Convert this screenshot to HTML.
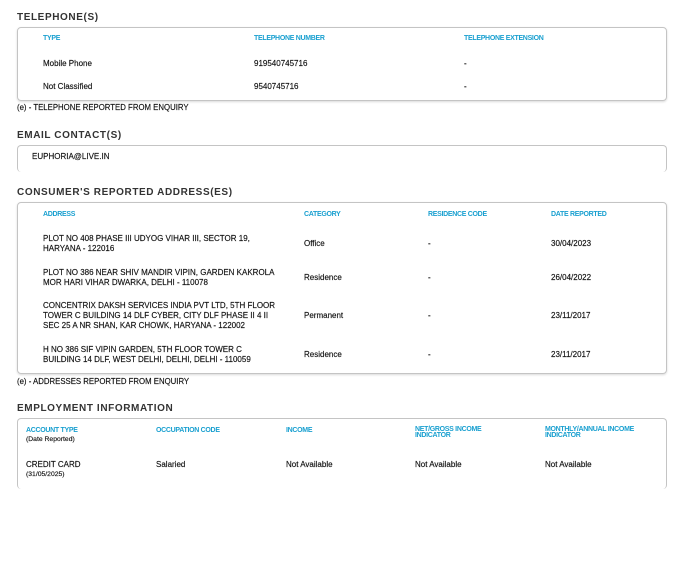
<!DOCTYPE html>
<html><head><meta charset="utf-8"><style>
body{margin:0;width:686px;height:578px;background:#fff;font-family:"Liberation Sans",sans-serif;color:#222;position:relative;overflow:hidden}
div{position:absolute;white-space:nowrap}
.t{font-size:10px;font-weight:bold;color:#333;letter-spacing:0.6px;left:17px}
.box{border:1px solid #c4c4c4;border-radius:4px;box-shadow:0 1px 2px rgba(0,0,0,.15);left:17px;width:648px}
.h{font-size:7px;font-weight:bold;color:#1aa0d0;letter-spacing:-0.3px}
.c{font-size:8px;color:#111;-webkit-text-stroke:0.15px #111}
.f{font-size:7.8px;left:17px;color:#111;-webkit-text-stroke:0.15px #111}
</style></head><body>
<div class="t" style="top:12px">TELEPHONE(S)</div>
<div class="box" style="top:27px;height:72px"></div>
<div class="h" style="top:35px;left:43px">TYPE</div>
<div class="h" style="top:35px;left:254px">TELEPHONE NUMBER</div>
<div class="h" style="top:35px;left:464px">TELEPHONE EXTENSION</div>
<div class="c" style="top:59px;left:43px">Mobile Phone</div>
<div class="c" style="top:59px;left:254px">919540745716</div>
<div class="c" style="top:59px;left:464px">-</div>
<div class="c" style="top:82px;left:43px">Not Classified</div>
<div class="c" style="top:82px;left:254px">9540745716</div>
<div class="c" style="top:82px;left:464px">-</div>
<div class="f" style="top:103px">(e) - TELEPHONE REPORTED FROM ENQUIRY</div>
<div class="t" style="top:130px">EMAIL CONTACT(S)</div>
<div class="box" style="top:145px;height:26px;border-bottom:none;box-shadow:none"></div>
<div class="c" style="top:152px;left:32px">EUPHORIA@LIVE.IN</div>
<div class="t" style="top:187px">CONSUMER'S REPORTED ADDRESS(ES)</div>
<div class="box" style="top:202px;height:170px"></div>
<div class="h" style="top:211px;left:43px">ADDRESS</div>
<div class="h" style="top:211px;left:304px">CATEGORY</div>
<div class="h" style="top:211px;left:428px">RESIDENCE CODE</div>
<div class="h" style="top:211px;left:551px">DATE REPORTED</div>
<div class="c" style="top:234px;left:43px;line-height:10px">PLOT NO 408 PHASE III UDYOG VIHAR III, SECTOR 19,<br>HARYANA - 122016</div>
<div class="c" style="top:239px;left:304px">Office</div><div class="c" style="top:239px;left:428px">-</div><div class="c" style="top:239px;left:551px">30/04/2023</div>
<div class="c" style="top:268px;left:43px;line-height:10px">PLOT NO 386 NEAR SHIV MANDIR VIPIN, GARDEN KAKROLA<br>MOR HARI VIHAR DWARKA, DELHI - 110078</div>
<div class="c" style="top:273px;left:304px">Residence</div><div class="c" style="top:273px;left:428px">-</div><div class="c" style="top:273px;left:551px">26/04/2022</div>
<div class="c" style="top:301px;left:43px;line-height:10px">CONCENTRIX DAKSH SERVICES INDIA PVT LTD, 5TH FLOOR<br>TOWER C BUILDING 14 DLF CYBER, CITY DLF PHASE II 4 II<br>SEC 25 A NR SHAN, KAR CHOWK, HARYANA - 122002</div>
<div class="c" style="top:311px;left:304px">Permanent</div><div class="c" style="top:311px;left:428px">-</div><div class="c" style="top:311px;left:551px">23/11/2017</div>
<div class="c" style="top:345px;left:43px;line-height:10px">H NO 386 SIF VIPIN GARDEN, 5TH FLOOR TOWER C<br>BUILDING 14 DLF, WEST DELHI, DELHI, DELHI - 110059</div>
<div class="c" style="top:350px;left:304px">Residence</div><div class="c" style="top:350px;left:428px">-</div><div class="c" style="top:350px;left:551px">23/11/2017</div>
<div class="f" style="top:377px">(e) - ADDRESSES REPORTED FROM ENQUIRY</div>
<div class="t" style="top:403px">EMPLOYMENT INFORMATION</div>
<div class="box" style="top:418px;height:70px;border-bottom:none;box-shadow:none"></div>
<div class="h" style="top:427px;left:26px">ACCOUNT TYPE</div>
<div class="c" style="top:436px;left:26px;font-size:6.8px">(Date Reported)</div>
<div class="h" style="top:427px;left:156px">OCCUPATION CODE</div>
<div class="h" style="top:427px;left:286px">INCOME</div>
<div class="h" style="top:427px;left:415px;line-height:6px">NET/GROSS INCOME<br>INDICATOR</div>
<div class="h" style="top:427px;left:545px;line-height:6px">MONTHLY/ANNUAL INCOME<br>INDICATOR</div>
<div class="c" style="top:460px;left:26px">CREDIT CARD</div>
<div class="c" style="top:471px;left:26px;font-size:6.8px">(31/05/2025)</div>
<div class="c" style="top:460px;left:156px">Salaried</div>
<div class="c" style="top:460px;left:286px">Not Available</div>
<div class="c" style="top:460px;left:415px">Not Available</div>
<div class="c" style="top:460px;left:545px">Not Available</div>
</body></html>
